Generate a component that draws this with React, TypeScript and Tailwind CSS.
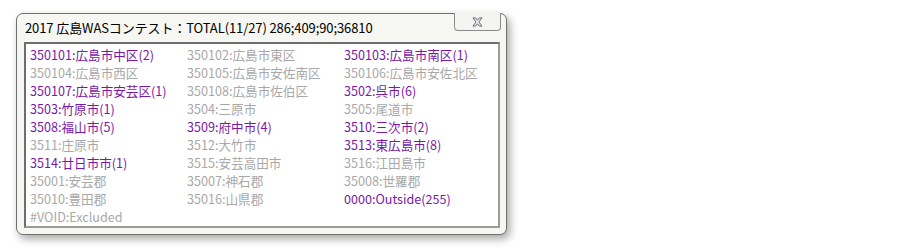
const rows: [string, boolean][][] = [
  [["350101:広島市中区(2)", true], ["350102:広島市東区", false], ["350103:広島市南区(1)", true]],
  [["350104:広島市西区", false], ["350105:広島市安佐南区", false], ["350106:広島市安佐北区", false]],
  [["350107:広島市安芸区(1)", true], ["350108:広島市佐伯区", false], ["3502:呉市(6)", true]],
  [["3503:竹原市(1)", true], ["3504:三原市", false], ["3505:尾道市", false]],
  [["3508:福山市(5)", true], ["3509:府中市(4)", true], ["3510:三次市(2)", true]],
  [["3511:庄原市", false], ["3512:大竹市", false], ["3513:東広島市(8)", true]],
  [["3514:廿日市市(1)", true], ["3515:安芸高田市", false], ["3516:江田島市", false]],
  [["35001:安芸郡", false], ["35007:神石郡", false], ["35008:世羅郡", false]],
  [["35010:豊田郡", false], ["35016:山県郡", false], ["0000:Outside(255)", true]],
  [["#VOID:Excluded", false], ["", false], ["", false]],
];

export default function App() {
  return (
    <div
      className="w-[900px] h-[250px] bg-white pt-[13px] pl-[16px]"
      style={{ fontFamily: '"Noto Sans CJK JP", "Noto Sans", sans-serif' }}
    >
      <div className="w-[491px] h-[222px] rounded-[7px] border border-[#6f6f6f] bg-[#f6f6f2] shadow-[3px_4px_8px_rgba(0,0,0,0.35)] flex flex-col px-[7px]">
        <div className="flex items-start h-[28px]">
          <div className="flex-1 pt-[5px] pl-[1px] text-[13px] leading-[18px] text-black tracking-[-0.1px]">
            2017 広島WASコンテスト：TOTAL(11/27) 286;409;90;36810
          </div>
          <div className="w-[47px] h-[18px] mr-[-2px] mt-[-1px] border border-[#8a8a8a] border-t-0 rounded-b-[4px] bg-[#f4f4f1] flex items-center justify-center">
            <svg width="13" height="10" viewBox="0 0 14 11">
              <path
                d="M2 1 L5 1 L7 3.5 L9 1 L12 1 L8.6 5.5 L12 10 L9 10 L7 7.5 L5 10 L2 10 L5.4 5.5 Z"
                fill="#e8eaee"
                stroke="#5a5f6a"
                strokeWidth="1"
                strokeLinejoin="round"
              />
            </svg>
          </div>
        </div>
        <div className="w-[476px] h-[186px] border-2 border-[#6e6e6e] border-r-[#9a9a9a] border-b-[#9a9a9a] bg-white pl-[4px] pt-[2px]">
          <div className="grid grid-cols-[157px_157px_157px]">
            {rows.map((row, i) =>
              row.map(([t, on], j) => (
                <div
                  key={i + "-" + j}
                  className={
                    "h-[18px] text-[12.6px] leading-[18px] whitespace-nowrap " +
                    (on ? "text-[#7a18a6]" : "text-[#a8a8a8]")
                  }
                >
                  {t}
                </div>
              ))
            )}
          </div>
        </div>
      </div>
    </div>
  );
}
